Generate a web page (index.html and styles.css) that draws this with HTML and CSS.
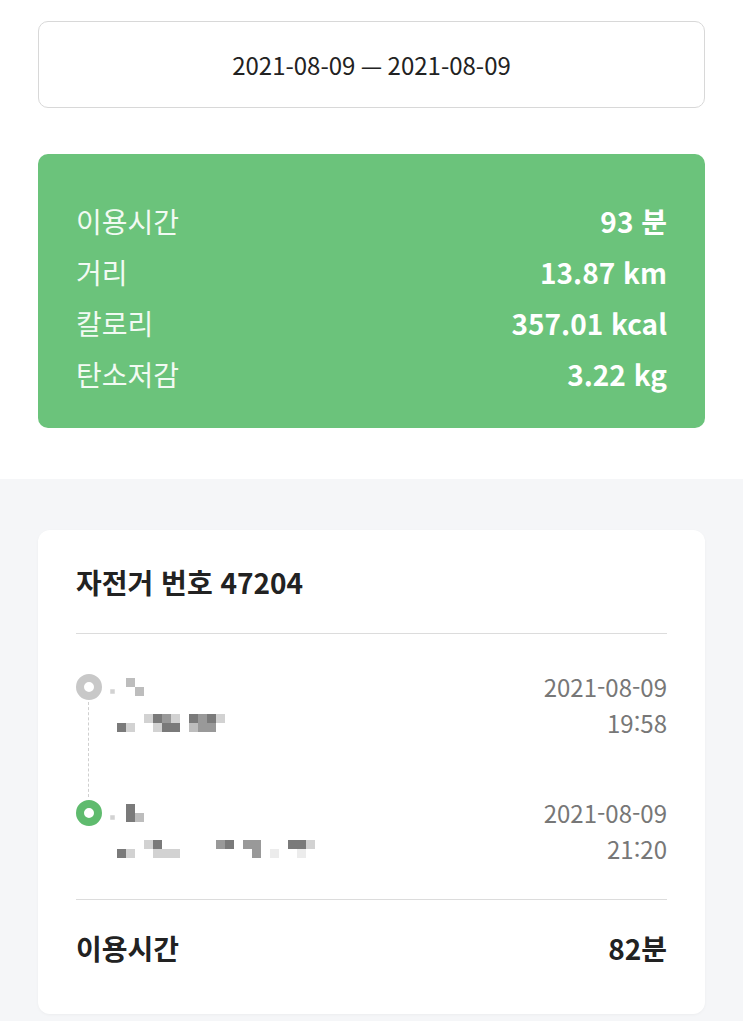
FILE: index.html
```html
<!DOCTYPE html>
<html lang="ko">
<head>
<meta charset="utf-8">
<link rel="stylesheet" href="styles.css">
</head>
<body>
<section class="top">
  <div class="date-box">2021-08-09 — 2021-08-09</div>
  <div class="summary">
    <div class="sum-row"><span class="sum-label">이용시간</span><span class="sum-value">93 분</span></div>
    <div class="sum-row"><span class="sum-label">거리</span><span class="sum-value">13.87 km</span></div>
    <div class="sum-row"><span class="sum-label">칼로리</span><span class="sum-value">357.01 kcal</span></div>
    <div class="sum-row"><span class="sum-label">탄소저감</span><span class="sum-value">3.22 kg</span></div>
  </div>
</section>
<section class="bottom">
  <div class="ride-card">
    <div class="ride-head">자전거 번호 47204</div>
    <div class="timeline">
      <div class="station station-start">
        <div class="marker"><span class="dot dot-gray"></span></div>
        <div class="station-info">
          <div class="line">
            <span class="mosaic">
              <span class="mrow"><i class="c0"></i><i class="c0"></i><i class="c2"></i><i class="c0"></i></span>
              <span class="mrow"><i class="c1 sm"></i><i class="c0"></i><i class="c0"></i><i class="c2"></i></span>
            </span>
          </div>
          <div class="line indent">
            <span class="mosaic">
              <span class="mrow"><i class="c0"></i><i class="c0"></i><i class="c0"></i><i class="c1"></i><i class="c4"></i><i class="c3"></i><i class="c1"></i><i class="c0"></i><i class="c4"></i><i class="c3"></i><i class="c4"></i><i class="c1"></i></span>
              <span class="mrow"><i class="c4"></i><i class="c1"></i><i class="c0"></i><i class="c0"></i><i class="c1"></i><i class="c4"></i><i class="c4"></i><i class="c0"></i><i class="c2"></i><i class="c3"></i><i class="c3"></i><i class="c0"></i></span>
            </span>
          </div>
        </div>
        <div class="station-time">
          <div class="line">2021-08-09</div>
          <div class="line">19:58</div>
        </div>
      </div>
      <div class="station">
        <div class="marker"><span class="dot dot-green"></span></div>
        <div class="station-info">
          <div class="line">
            <span class="mosaic">
              <span class="mrow"><i class="c0"></i><i class="c0"></i><i class="c4"></i><i class="c0"></i></span>
              <span class="mrow"><i class="c1 sm"></i><i class="c0"></i><i class="c4"></i><i class="c2"></i></span>
            </span>
          </div>
          <div class="line indent">
            <span class="mosaic">
              <span class="mrow"><i class="c0"></i><i class="c0"></i><i class="c0"></i><i class="c1"></i><i class="c4"></i><i class="c0"></i><i class="c0"></i><i class="c0"></i><i class="c0"></i><i class="c0"></i><i class="c0"></i><i class="c3"></i><i class="c4"></i><i class="c0"></i><i class="c3"></i><i class="c3"></i><i class="c0"></i><i class="c0"></i><i class="c0"></i><i class="c4"></i><i class="c4"></i><i class="c1"></i></span>
              <span class="mrow"><i class="c4"></i><i class="c1"></i><i class="c0"></i><i class="c0"></i><i class="c1"></i><i class="c1"></i><i class="c1"></i><i class="c0"></i><i class="c0"></i><i class="c0"></i><i class="c0"></i><i class="c0"></i><i class="c0"></i><i class="c0"></i><i class="c0"></i><i class="c3"></i><i class="c0"></i><i class="c5"></i><i class="c0"></i><i class="c0"></i><i class="c5"></i><i class="c0"></i></span>
            </span>
          </div>
        </div>
        <div class="station-time">
          <div class="line">2021-08-09</div>
          <div class="line">21:20</div>
        </div>
      </div>
    </div>
    <div class="ride-foot"><span>이용시간</span><span>82분</span></div>
  </div>
</section>
</body>
</html>
```

FILE: styles.css
```css
* { box-sizing: border-box; }
html, body { margin: 0; padding: 0; }
body {
  font-family: "Noto Sans CJK KR", "Noto Sans", sans-serif;
  background: #f5f6f8;
  color: #222;
  width: 743px;
  min-height: 1021px;
}
.top {
  background: #fff;
  padding: 21px 38px 51px;
}
.date-box {
  height: 87px;
  border: 1.5px solid #d8d8d8;
  border-radius: 10px;
  display: flex;
  align-items: center;
  justify-content: center;
  font-size: 24px;
  color: #222;
  margin-bottom: 46px;
}
.summary {
  background: #6bc37b;
  border-radius: 10px;
  padding: 42px 38px 28px;
  color: #fff;
}
.sum-row {
  display: flex;
  justify-content: space-between;
  line-height: 51px;
  font-size: 28px;
}
.sum-label { font-weight: 400; color: #f2faf3; }
.sum-value { font-weight: 700; }
.bottom {
  padding: 51px 38px 7px;
}
.ride-card {
  background: #fff;
  border-radius: 12px;
  padding: 0 38px;
  box-shadow: 0 1px 3px rgba(0,0,0,0.04);
}
.ride-head {
  height: 104px;
  display: flex;
  align-items: center;
  font-size: 28px;
  font-weight: 700;
  border-bottom: 1.5px solid #dcdcdc;
}
.timeline {
  padding: 35px 0 32px;
  border-bottom: 1.5px solid #dcdcdc;
}
.station {
  display: flex;
  position: relative;
}
.station-start { margin-bottom: 54px; }
.station-start::after {
  content: "";
  position: absolute;
  left: 12px;
  top: 33px;
  height: 95px;
  border-left: 1.5px dashed #cfcfcf;
}
.marker {
  width: 26px;
  flex: none;
  padding-top: 5px;
}
.dot {
  display: block;
  width: 26px;
  height: 26px;
  border-radius: 50%;
  border: 8px solid #c8c8c8;
  background: #fff;
}
.dot-green { border-color: #5fbb6e; }
.station-info {
  flex: 1;
  padding-left: 6px;
}
.line {
  height: 36px;
  line-height: 36px;
  display: flex;
  align-items: center;
}
.indent { padding-left: 9px; }
.mosaic { display: flex; flex-direction: column; }
.mrow { display: flex; }
.mrow i { display: block; width: 9px; height: 9px; }
.c0 { background: transparent; }
.c1 { background: #d2d2d2; }
.c2 { background: #bdbdbd; }
.c3 { background: #999; }
.c4 { background: #7a7a7a; }
.c5 { background: #ececec; }
.sm { transform: scale(0.5); }
.station-time {
  text-align: right;
  font-size: 24px;
  color: #777;
}
.station-time .line { justify-content: flex-end; }
.ride-foot {
  display: flex;
  justify-content: space-between;
  font-size: 28px;
  font-weight: 700;
  line-height: 36px;
  padding: 30px 0 48px;
}
```
